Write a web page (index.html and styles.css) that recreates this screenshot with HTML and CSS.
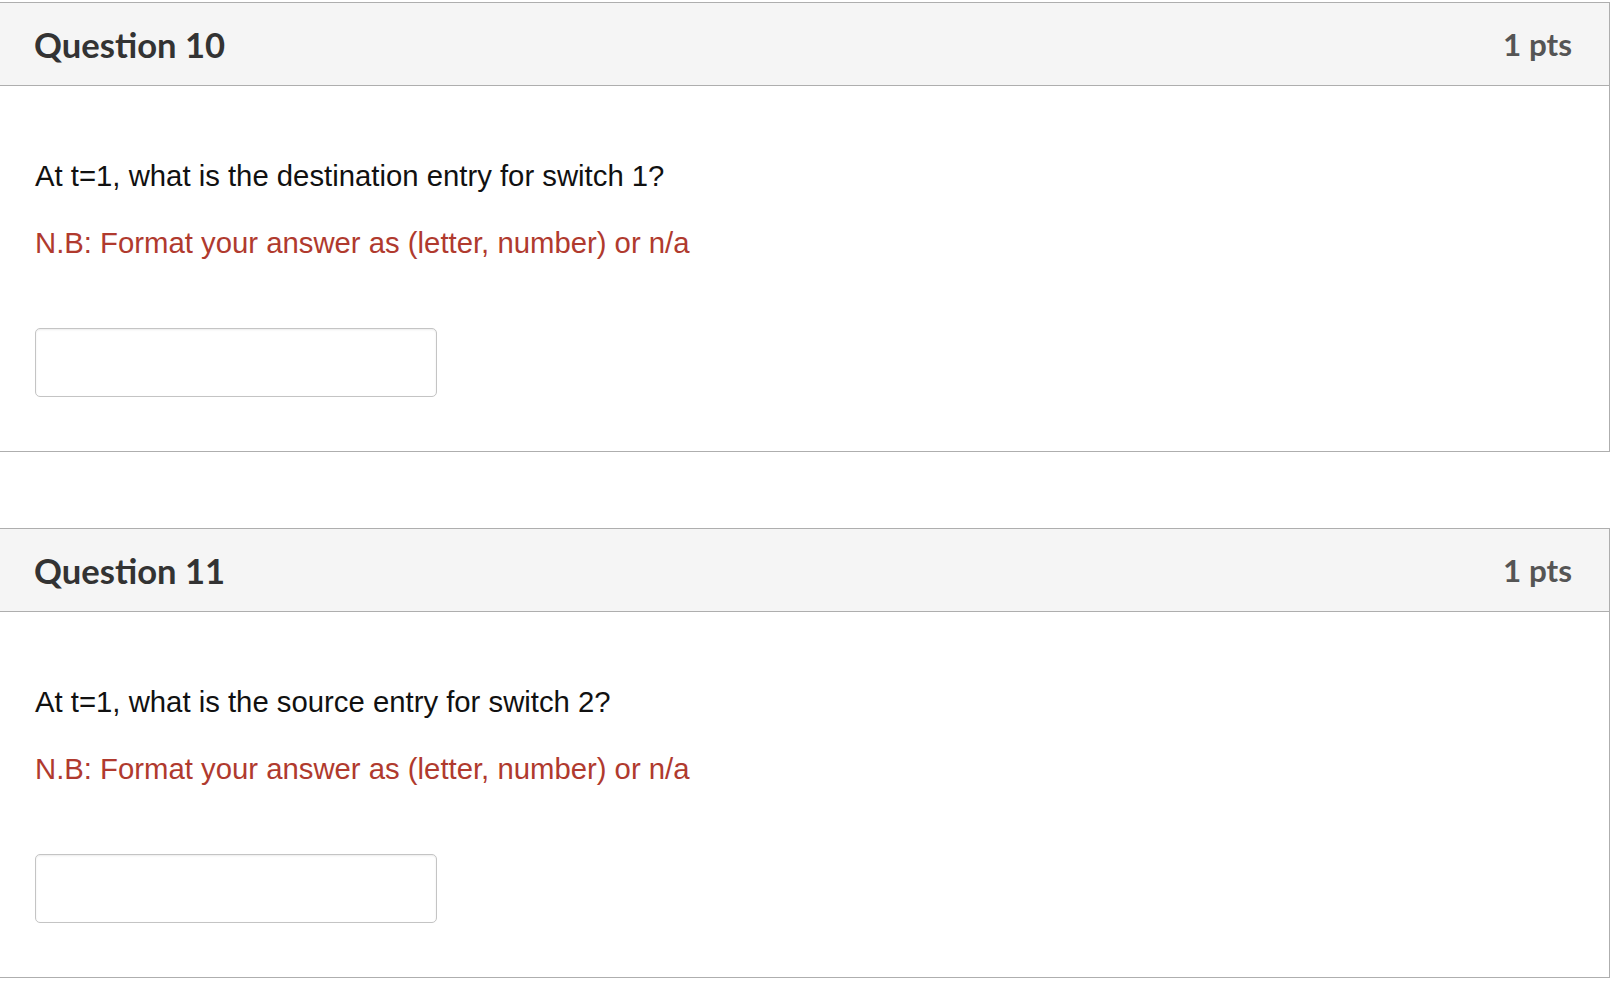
FILE: index.html
```html
<!DOCTYPE html>
<html lang="en">
<head>
<meta charset="utf-8">
<title>Quiz</title>
<link rel="stylesheet" href="styles.css">
</head>
<body>
<main class="quiz">
  <section class="question">
    <header class="q-header">
      <h2 class="q-title">Question 10</h2>
      <span class="q-points">1 pts</span>
    </header>
    <div class="q-body">
      <p class="q-text">At t=1, what is the destination entry for switch 1?</p>
      <p class="q-note">N.B: Format your answer as (letter, number) or n/a</p>
      <input class="q-input" type="text" aria-label="Answer">
    </div>
  </section>
  <section class="question">
    <header class="q-header">
      <h2 class="q-title">Question 11</h2>
      <span class="q-points">1 pts</span>
    </header>
    <div class="q-body">
      <p class="q-text">At t=1, what is the source entry for switch 2?</p>
      <p class="q-note">N.B: Format your answer as (letter, number) or n/a</p>
      <input class="q-input" type="text" aria-label="Answer">
    </div>
  </section>
</main>
</body>
</html>
```
FILE: styles.css
```css
html, body {
  margin: 0;
  padding: 0;
  background: #ffffff;
}

.quiz {
  display: flex;
  flex-direction: column;
  gap: 76px;
  padding-top: 2px;
  width: 1610px;
}

.question {
  border: 1px solid #aeaeae;
  border-left: none;
  background: #ffffff;
}

.q-header {
  display: flex;
  align-items: center;
  justify-content: space-between;
  height: 82px;
  padding: 0 37px 0 34px;
  background: #f5f5f5;
  border-bottom: 1px solid #aeaeae;
}

.q-title {
  margin: 0;
  font-family: Lato, "Open Sans", sans-serif;
  font-weight: 700;
  font-size: 34.6px;
  color: #333333;
}

.q-points {
  font-family: Lato, "Open Sans", sans-serif;
  font-weight: 700;
  font-size: 31.4px;
  color: #555555;
}

.q-body {
  display: flex;
  flex-direction: column;
  align-items: flex-start;
  padding: 70px 35px 54px 35px;
}

.q-text,
.q-note {
  margin: 0;
  font-family: "Liberation Sans", Arial, sans-serif;
  font-size: 29.3px;
  line-height: 40px;
}

.q-text {
  color: #111111;
}

.q-note {
  margin-top: 27px;
  color: #b03a2e;
}

.q-input {
  margin-top: 65px;
  box-sizing: border-box;
  width: 402px;
  height: 69px;
  border: 1px solid #c4c4c4;
  border-radius: 5px;
  box-shadow: inset 0 1px 2px rgba(0, 0, 0, 0.08);
  background: #ffffff;
  padding: 0 12px;
  font-size: 26px;
}
```
